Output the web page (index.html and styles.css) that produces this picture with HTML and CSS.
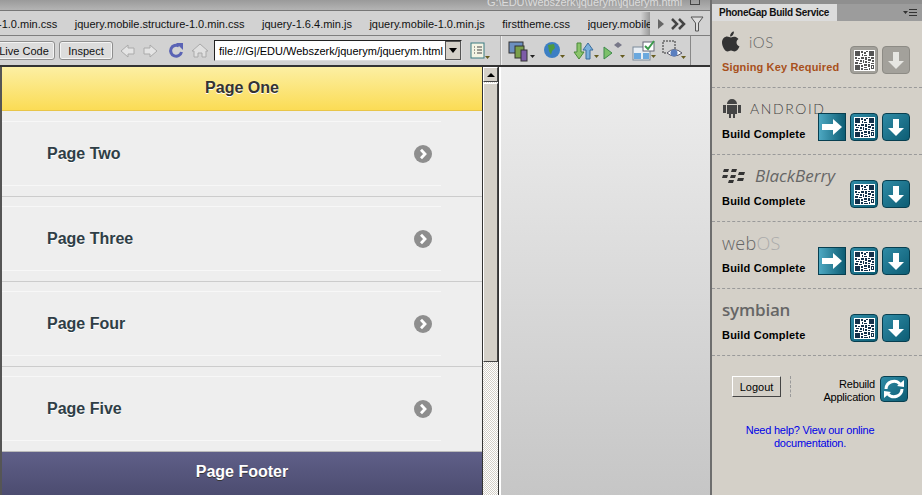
FILE: index.html
```html
<!DOCTYPE html>
<html lang="en">
<head>
<meta charset="utf-8">
<title>PhoneGap Build in Dreamweaver</title>
<link rel="stylesheet" href="styles.css">
</head>
<body>
<svg class="defs" width="0" height="0" aria-hidden="true">
  <defs>
    <symbol id="qr" viewBox="0 0 21 21">
      <rect width="21" height="21" fill="#fff"/>
      <path fill="currentColor" d="M1 1h5v5H1zM15 1h5v5h-5zM1 15h5v5H1zM7 1h2v2H7zM10 2h2v2h-2zM12 1h2v1h-2zM8 4h1v2H8zM10 5h3v1h-3zM1 7h2v2H1zM4 8h2v1H4zM7 7h3v2H7zM11 7h2v3h-2zM14 7h2v1h-2zM17 7h3v2h-3zM2 10h3v1H2zM6 10h2v2H6zM9 10h1v3H9zM14 9h3v2h-3zM18 10h2v2h-2zM1 12h3v2H1zM5 13h3v1H5zM11 11h2v2h-2zM14 12h2v1h-2zM17 13h3v1h-3zM7 15h2v2H7zM10 14h3v2h-3zM14 14h2v3h-2zM17 15h3v4h-3zM10 17h3v1h-3zM7 18h2v2H7zM10 19h4v1h-4zM15 18h1v2h-1z"/>
      <path fill="#fff" d="M18 16h1v2h-1z"/>
    </symbol>
    <symbol id="down" viewBox="0 0 28 28"><path fill="currentColor" d="M11 6h6v9h5l-8 8-8-8h5z"/></symbol>
    <symbol id="right" viewBox="0 0 28 28"><path fill="currentColor" d="M4 11h11V6l9 8-9 8v-5H4z"/></symbol>
    <symbol id="chev" viewBox="0 0 18 18"><circle cx="9" cy="9" r="9" fill="#8e8e8e"/><path fill="none" stroke="#fff" stroke-width="2.8" d="M7 4.800 11 9l-4 4.200"/></symbol>
  </defs>
</svg>
<div class="app">
  <main class="main">
    <div class="titlebar"><span class="doc-title">G:\EDU\Webszerk\jquerym\jquerym.html</span><span class="win-btn"></span></div>
    <div class="tabs">
      <span class="tab tab-first">-1.0.min.css</span>
      <span class="tab">jquery.mobile.structure-1.0.min.css</span>
      <span class="tab">jquery-1.6.4.min.js</span>
      <span class="tab">jquery.mobile-1.0.min.js</span>
      <span class="tab">firsttheme.css</span>
      <span class="tab tab-cut">jquery.mobile</span>
      <svg class="tab-more" width="50" height="18" viewBox="0 0 50 18"><path fill="#666" d="M2 4l6 5-6 5z"/><path fill="none" stroke="#444" stroke-width="2.500" d="M16 4l5 5-5 5M23 4l5 5-5 5"/><path fill="#ddd" stroke="#555" d="M35 2h12l-4.500 6v8h-3V8z"/></svg>
    </div>
    <div class="toolbar">
      <div class="tb-left">
        <button class="tb-btn btn-live" type="button">Live Code</button>
        <button class="tb-btn btn-inspect" type="button">Inspect</button>
        <svg class="nav" width="94" height="20" viewBox="0 0 94 20">
          <path fill="#e4e4e4" stroke="#aaa" d="M1 10l7-6v3h6v6H8v3z"/>
          <path fill="#e4e4e4" stroke="#aaa" d="M37 10l-7-6v3h-6v6h6v3z"/>
          <path fill="none" stroke="#5a63b5" stroke-width="3" d="M59 5a5.500 5.500 0 1 0 2.500 6"/><path fill="#5a63b5" d="M56 2h7v7z"/>
          <path fill="#e0e0e0" stroke="#aaa" d="M72 10l8-7 8 7h-2v6h-4v-4h-4v4h-4v-6z"/>
        </svg>
        <div class="addr"><span class="addr-text">file:///G|/EDU/Webszerk/jquerym/jquerym.html</span><span class="addr-drop"></span></div>
        <svg class="ico-list" width="20" height="20" viewBox="0 0 20 20"><rect x="1" y="2" width="13" height="15" fill="#f4f4e4" stroke="#3a7a80"/><path stroke="#444" d="M4 6h1m2 0h5M4 9h1m2 0h5M4 12h1m2 0h5"/><path fill="#665c20" d="M15 15h5l-2.500 3z"/></svg>
      </div>
      <div class="tb-right">
        <svg width="189" height="24" viewBox="0 0 189 24">
          <rect x="8" y="3" width="14" height="11" fill="#6c8fc0" stroke="#333"/><rect x="14" y="7" width="9" height="12" fill="#7ba04a" stroke="#333"/><rect x="20" y="11" width="6" height="11" fill="#7d5ba8" stroke="#333"/><path fill="#222" d="M29 16h5l-2.500 3z"/>
          <circle cx="51" cy="11" r="8" fill="#3c7fc4"/><path fill="#4d9a40" d="M47 6l6-1 1 4-3 3-1 4-2-4z"/><path fill="#665c20" d="M59 16h5l-2.500 3z"/>
          <path fill="#8bc46b" stroke="#4b8a3a" d="M76 4h4v9h3l-5 7-5-7h3z"/><path fill="#7bb0dc" stroke="#3a6d9d" d="M85 20h4v-9h3l-5-7-5 7h3z"/><path fill="#665c20" d="M93 16h5l-2.500 3z"/>
          <path fill="#7cc06a" stroke="#3d8a4a" d="M103 8l8 6-8 6z"/><path fill="#778" d="M113 6l4-3 4 3-4 3z"/><path fill="#665c20" d="M119 16h5l-2.500 3z"/>
          <rect x="132" y="8" width="17" height="13" fill="#e8eef4" stroke="#7a8a9a"/><path fill="#6aa8de" d="M133 14h7v6h-7zM142 14h6v6h-6z"/><rect x="142" y="3" width="11" height="9" fill="#fff" stroke="#667"/><path fill="none" stroke="#3b9a4b" stroke-width="2" d="M144 7l3 3 6-8"/><path fill="#665c20" d="M150 16h5l-2.500 3z"/>
          <path fill="none" stroke="#333" stroke-dasharray="2 1" d="M162 2h12v12h-12z"/><path fill="#fff" stroke="#556" d="M166 14q7-7 15 0-8 6-15 0z"/><circle cx="173" cy="14" r="3.500" fill="#5a7fc0"/><path fill="#665c20" d="M180 17h5l-2.500 3z"/>
        </svg>
      </div>
    </div>
    <div class="viewport">
      <div class="page">
        <header class="page-head">Page One</header>
        <ul class="list">
          <li class="row"><div class="row-in"><span>Page Two</span><svg class="chev" width="18" height="18"><use href="#chev"/></svg></div></li>
          <li class="row"><div class="row-in"><span>Page Three</span><svg class="chev" width="18" height="18"><use href="#chev"/></svg></div></li>
          <li class="row"><div class="row-in"><span>Page Four</span><svg class="chev" width="18" height="18"><use href="#chev"/></svg></div></li>
          <li class="row"><div class="row-in"><span>Page Five</span><svg class="chev" width="18" height="18"><use href="#chev"/></svg></div></li>
        </ul>
        <footer class="page-foot">Page Footer</footer>
      </div>
      <div class="scrollbar">
        <div class="sb-up"><span class="sb-tri"></span></div>
        <div class="sb-thumb"></div>
        <div class="sb-track"></div>
      </div>
      <div class="side-gray"></div>
    </div>
  </main>
  <aside class="panel">
    <div class="panel-tabs"><span class="panel-tab">PhoneGap Build Service</span><svg class="panel-menu" width="14" height="8" viewBox="0 0 14 8"><path fill="#333" d="M0 2h5L2.500 5zM6 0h8v1H6zM6 3h8v1H6zM6 6h8v1H6z"/></svg></div>
    <section class="plat">
      <div class="plat-info">
        <div class="logo logo-ios"><svg width="18" height="21" viewBox="0 0 18 20"><path fill="#333" d="M12 0c0 3-2 5-4 5 0-3 2-5 4-5zM9 6c2-1 5-1.500 7.500 1.500-3 2-2.500 6 1 7.500-1 2.500-3 5-5 5-1.500 0-2-1-3.500-1s-2 1-3.500 1C3 20 0 15 0 11c0-4 3-6 5-6 1.500 0 3 1 4 1z"/></svg><span class="ios-text">iOS</span></div>
        <div class="status status-warn">Signing Key Required</div>
      </div>
      <div class="btns">
        <span class="ib ib-off"><svg class="qr" width="21" height="21"><use href="#qr"/></svg></span>
        <span class="ib ib-off"><svg width="28" height="28"><use href="#down"/></svg></span>
      </div>
    </section>
    <section class="plat">
      <div class="plat-info">
        <div class="logo logo-android"><svg width="20" height="21" viewBox="0 0 20 21"><path fill="#444" d="M5 6a5 5 0 0 1 10 0zM5 7h10v9h-2v4h-2v-4H9v4H7v-4H5zM1 7h3v8H1zM16 7h3v8h-3z"/></svg><span class="android-text">android</span></div>
        <div class="status">Build Complete</div>
      </div>
      <div class="btns">
        <span class="ib ib-sq"><svg width="28" height="28"><use href="#right"/></svg></span>
        <span class="ib"><svg class="qr" width="21" height="21"><use href="#qr"/></svg></span>
        <span class="ib"><svg width="28" height="28"><use href="#down"/></svg></span>
      </div>
    </section>
    <section class="plat">
      <div class="plat-info">
        <div class="logo logo-bb"><svg width="24" height="16" viewBox="0 0 24 16"><path fill="#333" d="M2 1h5L6 4H1zM10 1h5l-1 3H9zM1 7h5L5 10H0zM9 7h5l-1 3H8zM17 4h6l-1 3h-6zM16 10h6l-1 3h-6zM7 12h5l-1 3H6z"/></svg><span class="bb-text">BlackBerry</span></div>
        <div class="status">Build Complete</div>
      </div>
      <div class="btns">
        <span class="ib"><svg class="qr" width="21" height="21"><use href="#qr"/></svg></span>
        <span class="ib"><svg width="28" height="28"><use href="#down"/></svg></span>
      </div>
    </section>
    <section class="plat">
      <div class="plat-info">
        <div class="logo logo-web"><span class="web-text">web<span class="web-os">OS</span></span></div>
        <div class="status">Build Complete</div>
      </div>
      <div class="btns">
        <span class="ib ib-sq"><svg width="28" height="28"><use href="#right"/></svg></span>
        <span class="ib"><svg class="qr" width="21" height="21"><use href="#qr"/></svg></span>
        <span class="ib"><svg width="28" height="28"><use href="#down"/></svg></span>
      </div>
    </section>
    <section class="plat">
      <div class="plat-info">
        <div class="logo logo-sym"><span class="sym-text">symbian</span></div>
        <div class="status">Build Complete</div>
      </div>
      <div class="btns">
        <span class="ib"><svg class="qr" width="21" height="21"><use href="#qr"/></svg></span>
        <span class="ib"><svg width="28" height="28"><use href="#down"/></svg></span>
      </div>
    </section>
    <div class="actions">
      <button class="logout" type="button">Logout</button>
      <span class="vdash"></span>
      <span class="rebuild">Rebuild<br>Application</span>
      <span class="ib ib-re"><svg width="28" height="26" viewBox="0 0 28 26"><path fill="none" stroke="#fff" stroke-width="3" d="M6 13a8 8 0 0 1 14-5M22 13a8 8 0 0 1-14 5"/><path fill="#fff" d="M17 10l7 1 0-7zM11 16l-7-1 0 7z"/></svg></span>
    </div>
    <a class="help" href="#">Need help? View our online<br>documentation.</a>
  </aside>
</div>
</body>
</html>
```
FILE: styles.css
```css
* { box-sizing: border-box; }
html, body { margin: 0; padding: 0; height: 100%; overflow: hidden; }
body { width: 922px; height: 495px; font-family: "Liberation Sans", Arial, sans-serif; background: #d4d0c8; }
.defs { display: block; height: 0; width: 0; }
.app { display: flex; width: 922px; height: 495px; }

.main { width: 710px; height: 495px; display: flex; flex-direction: column; overflow: hidden; }
.titlebar { height: 11px; background: linear-gradient(#9a9a9a, #b4b4b4); border-bottom: 1px solid #777; display: flex; justify-content: flex-end; overflow: hidden; }
.doc-title { font-size: 11px; color: #dcdcdc; line-height: 11px; margin-top: -3px; margin-right: 8px; white-space: nowrap; height: 13px; letter-spacing: -.08px; }
.win-btn { width: 10px; height: 5px; border: 1px solid #444; margin-right: 10px; border-top: 0; }
.tabs { height: 25px; background: #d2d2d2; border-bottom: 1px solid #7e7e7e; display: flex; align-items: center; padding-top: 1px; font-size: 11px; color: #111; overflow: hidden; }
.tab { white-space: nowrap; margin-left: 17.500px; flex: none; }
.tab-first { margin-left: -2px; }
.tab-cut { width: 62px; overflow: hidden; background: linear-gradient(90deg, transparent 85%, #999); height: 24px; line-height: 24px; }
.tab-more { margin-left: 6px; flex: none; }
.toolbar { height: 31px; background: #d2d2d2; border-bottom: 2px solid #333; display: flex; align-items: center; }
.tb-left { display: flex; align-items: center; height: 100%; width: 500px; flex: none; }
.tb-btn { height: 19px; font: 11px "Liberation Sans", Arial, sans-serif; color: #111; background: #dcdcdc; border: 1px solid #8e8e8e; border-radius: 3px; box-shadow: inset 0 0 0 1px #f4f4f4; padding: 0; flex: none; }
.btn-live { width: 62px; margin-left: -7px; }
.btn-inspect { width: 54px; margin-left: 4px; }
.nav { margin-left: 7px; flex: none; }
.addr { width: 248px; height: 21px; background: #fff; border: 1px solid; border-color: #222 #ddd #ddd #222; display: flex; align-items: center; font-size: 11px; color: #000; overflow: hidden; flex: none; }
.addr-text { flex: 1; padding-left: 4px; white-space: nowrap; overflow: hidden; }
.addr-drop { width: 16px; height: 19px; background: #d4d0c8; border: 1px solid #555; position: relative; flex: none; }
.addr-drop::after { content: ""; position: absolute; left: 3px; top: 6px; border: 4px solid transparent; border-top: 5px solid #000; border-bottom: 0; }
.ico-list { margin-left: 8px; flex: none; }
.tb-right { width: 191px; height: 100%; flex: none; display: flex; align-items: center; border-left: 1px solid #a8a8a8; border-right: 1px solid #888; box-shadow: inset 1px 0 #eee; }

.viewport { flex: 1; display: flex; min-height: 0; }
.page { width: 483px; height: 428px; border-right: 1px solid #333; border-left: 2px solid #555; display: flex; flex-direction: column; background: #eee; flex: none; }
.page-head { height: 44px; flex: none; background: linear-gradient(#fcefa3, #fbdc55); border-bottom: 1px solid #e8c548; font: bold 16px/41px "Liberation Sans", Arial, sans-serif; text-align: center; color: #333; text-shadow: 0 1px 0 #fff; }
.list { list-style: none; margin: 0; padding: 0; flex: 1; }
.row { height: 85px; background: #eee; border-top: 1px solid #ccc; padding: 9px 41px 10px 0; }
.row:first-child { border-top: 0; padding-top: 10px; }
.row-in { height: 65px; border-top: 1px solid #f7f7f7; border-bottom: 1px solid #f7f7f7; display: flex; align-items: center; justify-content: space-between; padding: 0 9px 0 45px; font-size: 16px; font-weight: bold; color: #2f3e46; text-shadow: 0 1px 0 #fff; }
.chev { display: block; }
.page-foot { height: 44px; flex: none; background: linear-gradient(#5f5f88, #4c4c70); border-top: 1px solid #bbb; font: bold 16px/39px "Liberation Sans", Arial, sans-serif; text-align: center; color: #fff; text-shadow: 0 1px 0 #333; }
.scrollbar { width: 16px; height: 428px; flex: none; background: repeating-conic-gradient(#fff 0 25%, #d4d0c8 0 50%) 0 0 / 2px 2px; border-right: 1px solid #333; display: flex; flex-direction: column; }
.sb-up { height: 15px; background: #d4d0c8; border: 1px solid; border-color: #fff #444 #444 #fff; display: flex; align-items: center; justify-content: center; flex: none; }
.sb-tri { border: 4px solid transparent; border-bottom: 4px solid #000; border-top: 0; }
.sb-thumb { height: 279px; background: #d4d0c8; border: 1px solid; border-color: #fff #444 #444 #fff; flex: none; margin-top: 1px; }
.sb-track { flex: 1; }
.side-gray { flex: 1; background: linear-gradient(#eeeeee, #c6c6c6); border-left: 2px solid #fff; height: 428px; }

.panel { width: 212px; height: 495px; flex: none; background: #d4d0c8; border-left: 2px solid #6e6e6e; display: flex; flex-direction: column; overflow: hidden; }
.panel-tabs { height: 21px; flex: none; border-top: 4px solid #8f8f8f; background: #9c9c9c; display: flex; align-items: center; justify-content: space-between; padding-right: 5px; }
.panel-tab { width: 125px; height: 17px; background: #dcdcdc; font: bold 10px/17px "Liberation Sans", Arial, sans-serif; letter-spacing: -.28px; color: #111; padding-left: 7px; white-space: nowrap; }
.plat { height: 67px; flex: none; border-bottom: 1px dashed #9a9a9a; display: flex; justify-content: space-between; position: relative; padding: 0 12px 0 10px; }
.plat-info { display: flex; flex-direction: column; width: 150px; flex: none; }
.logo { height: 25px; margin-top: 8px; display: flex; align-items: center; white-space: nowrap; color: #666; }
.status { font-size: 11px; font-weight: bold; color: #000; margin-top: 6px; line-height: 14px; letter-spacing: .2px; }
.status-warn { color: #a8501c; letter-spacing: .15px; }
.btns { display: flex; gap: 4px; position: absolute; right: 12px; top: 25px; }
.ib { width: 28px; height: 28px; flex: none; border-radius: 4px; background: linear-gradient(135deg, #2f8ba6, #0d5d74); border: 1px solid #083f50; color: #fff; display: flex; align-items: center; justify-content: center; }
.ib svg { margin: -1px; }
.ib .qr { margin: 0; color: #13304a; }
.ib-sq { border-radius: 0; background: linear-gradient(90deg, #4da8c2, #0d5d74); }
.ib-off { background: #a3a19b; border-color: #8d8b85; color: #e6e6e2; }
.ib-off .qr { color: #555; }
.ios-text { font: 300 15px "Lato", sans-serif; color: #666; margin-left: 9px; letter-spacing: .6px; }
.android-text { font: 300 14px/1 "Lato", sans-serif; color: #444; letter-spacing: 1.600px; margin-left: 8px; text-transform: uppercase; }
.bb-text { font: italic 17px "Open Sans", sans-serif; color: #666; margin-left: 9px; }
.web-text { font: 300 18px "Open Sans", sans-serif; color: #666; letter-spacing: .3px; }
.web-os { color: #aaa; }
.sym-text { font: 600 17px "Open Sans", sans-serif; color: #666; letter-spacing: -.2px; }
.actions { height: 51px; flex: none; display: flex; align-items: flex-start; padding: 20px 0 0 20px; }
.logout { width: 49px; height: 21px; font: 11px "Liberation Sans", Arial, sans-serif; color: #000; background: #d4d0c8; border: 1px solid; border-color: #fff #444 #444 #fff; padding: 0; flex: none; }
.vdash { height: 21px; border-left: 1px dashed #9a9a9a; margin-left: 9px; flex: none; }
.rebuild { width: 84px; padding-top: 2px; text-align: right; font-size: 11px; line-height: 13px; color: #000; letter-spacing: -.2px; flex: none; }
.ib-re { width: 28px; height: 26px; margin-left: 5px; }
.help { display: block; margin-top: 17px; padding-left: 8px; width: 188px; text-align: center; font-size: 11px; line-height: 13px; color: #0000e6; text-decoration: none; letter-spacing: -.22px; }
```
